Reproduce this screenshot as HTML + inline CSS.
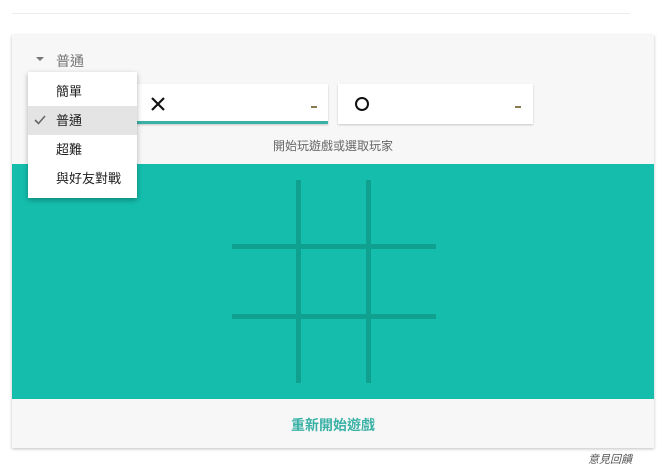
<!DOCTYPE html>
<html><head><meta charset="utf-8"><style>
body{margin:0;width:672px;height:470px;background:#fff;font-family:"Liberation Sans","Noto Sans CJK TC",sans-serif;position:relative;overflow:hidden}
.abs{position:absolute}
.card{left:12px;top:35px;width:642px;height:413px;background:#f7f7f7;box-shadow:0 1px 3px rgba(0,0,0,.25)}
.box{background:#fff;height:40px;width:195px;top:84px;box-shadow:0 1px 2px rgba(0,0,0,.2)}
.menu{left:28px;top:72px;width:109px;height:126px;background:#fff;box-shadow:0 2px 5px rgba(0,0,0,.3);font-size:13px;color:#222}
.menu div{position:absolute;left:0;width:109px;height:29px;line-height:29px;padding-left:28px;box-sizing:border-box}
.vl{background:#0fa090;width:5px;top:180px;height:203px}
.hl{background:#0fa090;height:5px;left:232px;width:204px}
.dash{width:6px;height:2px;background:#8a7a50;top:106px}
</style></head><body>
<div class="abs" style="left:12px;top:13px;width:618px;height:1px;background:#ececec"></div>
<div class="abs card"></div>
<div class="abs" style="left:36px;top:57px;width:0;height:0;border-left:4px solid transparent;border-right:4px solid transparent;border-top:4px solid #777"></div>
<div class="abs" style="left:56px;top:51px;font-size:14px;color:#777">普通</div>
<div class="abs box" style="left:133px;border-bottom:3px solid #3ab1a6;height:37px"></div>
<svg class="abs" style="left:151px;top:97px" width="14" height="14"><path d="M1 1L13 13M13 1L1 13" stroke="#111" stroke-width="2.2"/></svg>
<div class="abs dash" style="left:311px"></div>
<div class="abs box" style="left:338px"></div>
<div class="abs" style="left:355px;top:97px;width:10px;height:10px;border:2px solid #111;border-radius:50%"></div>
<div class="abs dash" style="left:515px"></div>
<div class="abs" style="left:0;width:666px;top:137px;text-align:center;font-size:12px;color:#666">開始玩遊戲或選取玩家</div>
<div class="abs" style="left:12px;top:164px;width:642px;height:235px;background:#14bdac"></div>
<div class="abs vl" style="left:296px"></div>
<div class="abs vl" style="left:366px"></div>
<div class="abs hl" style="top:244px"></div>
<div class="abs hl" style="top:314px"></div>
<div class="abs" style="left:0;width:666px;top:415px;text-align:center;font-size:14px;font-weight:bold;color:#3ab1a6">重新開始遊戲</div>
<div class="abs" style="left:588px;top:451px;font-size:11px;font-style:italic;color:#555">意見回饋</div>
<div class="abs menu">
<div style="top:5px">簡單</div>
<div style="top:34px;background:#e4e4e4">普通</div>
<div style="top:63px">超難</div>
<div style="top:92px">與好友對戰</div>
<svg class="abs" style="left:6px;top:43px" width="12" height="10"><path d="M1 5L4.5 8.5L11 1" stroke="#666" stroke-width="1.6" fill="none"/></svg>
</div>
</body></html>
